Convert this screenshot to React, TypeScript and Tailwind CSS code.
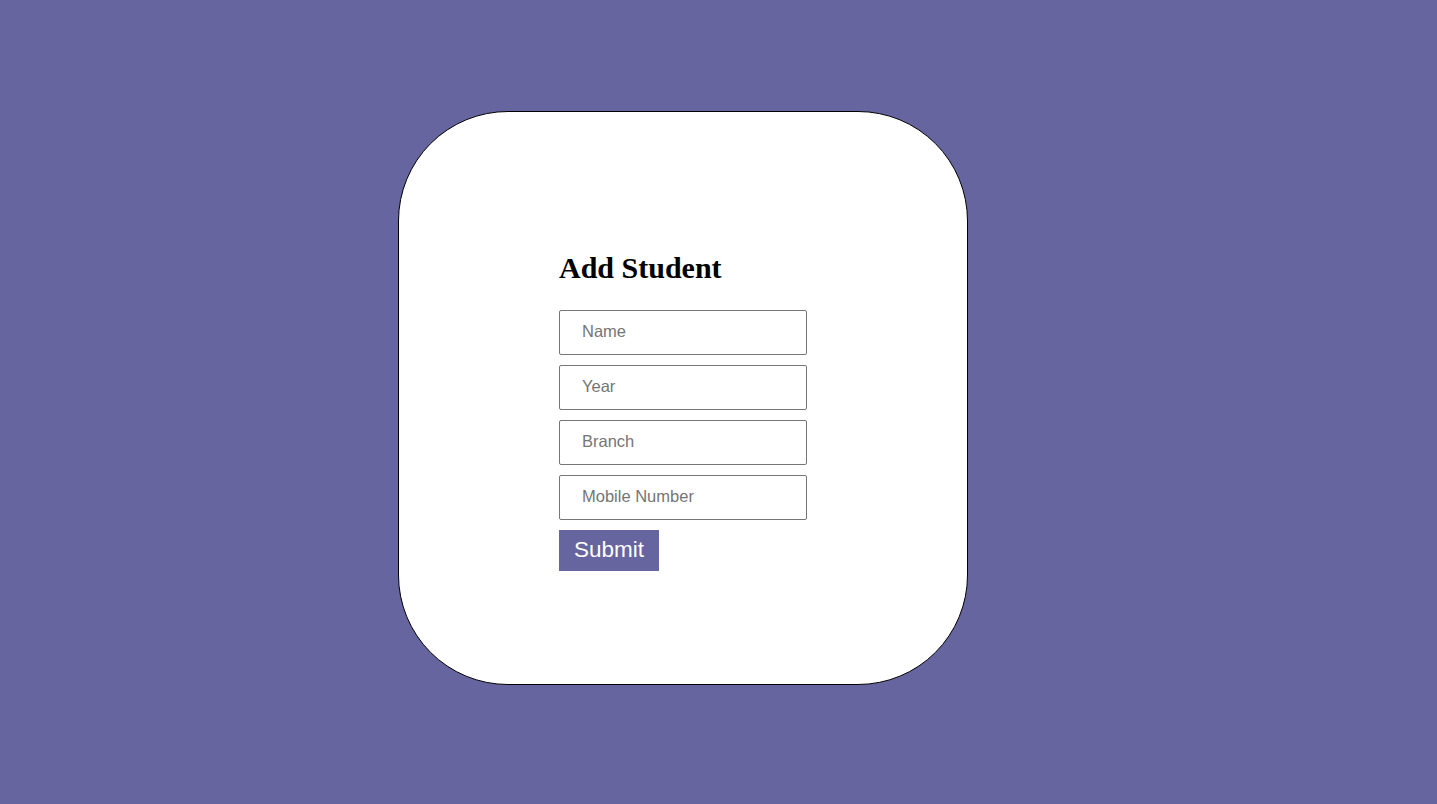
import { useState } from 'react';

const App = () => {
  const [form, setForm] = useState({ name: '', year: '', branch: '', mobile: '' });

  const fields: { key: keyof typeof form; label: string }[] = [
    { key: 'name', label: 'Name' },
    { key: 'year', label: 'Year' },
    { key: 'branch', label: 'Branch' },
    { key: 'mobile', label: 'Mobile Number' },
  ];

  return (
    <div className="min-h-screen w-full bg-[#6665a0] pt-[111px] pb-[119px]">
      {/* card */}
      <div className="ml-[398px] w-[570px] h-[574px] bg-white border border-black rounded-[110px] pl-[160px] pt-[139px]">
        <h1 className="text-[30px] font-bold text-black leading-[33px] mb-[26px] font-['Liberation_Serif','Times_New_Roman',serif]">
          Add Student
        </h1>
        <form
          className="flex flex-col gap-[10px] font-['Liberation_Sans',Arial,sans-serif]"
          onSubmit={(e) => e.preventDefault()}
        >
          {fields.map((f) => (
            <input
              key={f.key}
              type="text"
              placeholder={f.label}
              value={form[f.key]}
              onChange={(e) => setForm({ ...form, [f.key]: e.target.value })}
              className="w-[248px] h-[45px] border border-[#767676] rounded-[2px] pl-[22px] pb-[2px] text-[16.5px] text-black placeholder:text-[#757575] outline-none"
            />
          ))}
          <button
            type="submit"
            className="w-[100px] h-[41px] bg-[#6665a0] text-white text-[22.5px] leading-none"
          >
            Submit
          </button>
        </form>
      </div>
    </div>
  );
};

export default App;
